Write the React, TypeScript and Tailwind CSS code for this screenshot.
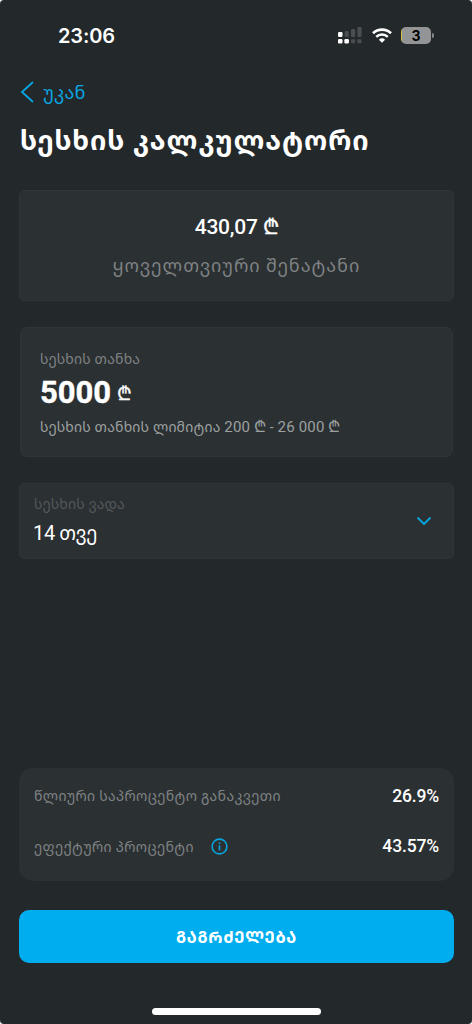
import { ChevronDown } from "lucide-react";
import type { ReactNode } from "react";

const rates = [
  { label: "წლიური საპროცენტო განაკვეთი", value: "26.9%", info: false },
  { label: "ეფექტური პროცენტი", value: "43.57%", info: true },
];

function SignalIcon() {
  return (
    <svg width="25" height="17" viewBox="0 0 25 17" fill="#fff">
      <rect x="0" y="5" width="4.5" height="5" rx="1.2" />
      <rect x="6.6" y="4" width="4.2" height="6" rx="1.2" fill="#4a4e50" />
      <rect x="13" y="2" width="4.2" height="8" rx="1.2" fill="#4a4e50" />
      <rect x="19.4" y="0" width="4.2" height="10" rx="1.2" fill="#4a4e50" />
      <rect x="0" y="12" width="4.5" height="4.5" rx="1.2" />
      <rect x="6.4" y="12" width="4.5" height="4.5" rx="1.2" />
      <rect x="13" y="12.2" width="4.2" height="4" rx="1.2" fill="#4a4e50" />
      <rect x="19.4" y="12.2" width="4.2" height="4" rx="1.2" fill="#4a4e50" />
    </svg>
  );
}

function WifiIcon() {
  return (
    <svg width="20" height="15" viewBox="0 0 20 15" fill="none" stroke="#fff">
      <path d="M1 5.2a13 13 0 0 1 18 0" strokeWidth="2.6" />
      <path d="M4.2 8.8a8.4 8.4 0 0 1 11.6 0" strokeWidth="2.5" />
      <path d="M10 14.8 6.9 11.8a4.5 4.5 0 0 1 6.2 0Z" fill="#fff" stroke="none" />
    </svg>
  );
}

function Battery() {
  return (
    <div className="flex items-center gap-px">
      <div className="flex h-[17px] w-[30px] items-center justify-center overflow-hidden rounded-[5px] bg-[linear-gradient(to_right,#d8c13c_1.5px,#929496_1.5px)] font-['Inter'] text-[14px] leading-none font-bold text-black">
        3
      </div>
      <div className="h-[5px] w-[2px] rounded-r-full bg-[#85888a]" />
    </div>
  );
}

function InfoIcon() {
  return (
    <svg width="17" height="17" viewBox="0 0 17 17" fill="none" stroke="#06a5e0">
      <circle cx="8.5" cy="8.5" r="7.4" strokeWidth="1.6" />
      <path d="M8.5 7.2v5.2" strokeWidth="1.6" />
      <path d="M8.5 4.4v1.6" strokeWidth="1.6" />
    </svg>
  );
}

function Lari({ className }: { className: string }) {
  return <span className={`inline-block font-['DejaVu_Sans'] leading-none font-normal ${className}`}>₾</span>;
}

function Card({ className, children }: { className: string; children: ReactNode }) {
  return <section className={`border border-[#303537] bg-[#2b3032] ${className}`}>{children}</section>;
}

export default function App() {
  return (
    <div className="h-[1024px] w-[472px] bg-white">
      <main className="flex h-full flex-col overflow-hidden rounded-[4px] bg-[#23282a] pr-[18px] pl-[19px] font-['Roboto','Noto_Sans_Georgian','Noto_Sans',sans-serif] whitespace-nowrap text-white">
        <header className="flex h-[71px] shrink-0 items-center justify-between pr-[20px] pl-[39px]">
          <span className="pt-px font-['Inter'] text-[20px] font-semibold tracking-[-0.1px]">23:06</span>
          <div className="flex items-center gap-[9px]">
            <SignalIcon />
            <WifiIcon />
            <Battery />
          </div>
        </header>

        <button className="flex h-[42px] shrink-0 items-center gap-[7px] text-[#0aa6e2]">
          <svg width="17" height="24" viewBox="0 0 17 24" fill="none" stroke="currentColor" strokeWidth="1.8">
            <path d="M14 2 3 12l11 10" />
          </svg>
          <span className="text-[18px] tracking-[0.2px]">უკან</span>
        </button>

        <h1 className="h-[77px] shrink-0 pt-[9px] pl-px text-[27px] leading-[38px] font-bold tracking-[0.93px]">
          სესხის კალკულატორი
        </h1>

        <Card className="flex h-[111px] shrink-0 flex-col items-center rounded-[5px] pt-[22px]">
          <p className="h-[28px] text-[21px] leading-[28px] font-medium tracking-[-0.25px]">
            430,07 <Lari className="text-[21px] [-webkit-text-stroke:0.4px_white]" />
          </p>
          <p className="mt-[10px] text-[18px] leading-[30px] tracking-[0.95px] text-[#7f8284]">ყოველთვიური შენატანი</p>
        </Card>

        <Card className="mx-px mt-[26px] flex h-[130px] shrink-0 flex-col rounded-[7px] px-[19px] pt-[20px]">
          <p className="text-[14px] leading-[22px] tracking-[0.2px] text-[#7f8284]">სესხის თანხა</p>
          <p className="mt-[4px] flex h-[38px] items-center gap-[6px]">
            <span className="text-[31px] font-bold [-webkit-text-stroke:0.4px_white]">5000</span>
            <Lari className="text-[19px] [-webkit-text-stroke:0.3px_white]" />
          </p>
          <p className="mt-[5px] h-[20px] text-[14px] leading-[20px] tracking-[0.2px] text-[#9da0a1]">
            სესხის თანხის ლიმიტია <span className="text-[15px]">200</span> <Lari className="text-[16px]" /> -{" "}
            <span className="text-[15px]">26 000</span> <Lari className="text-[16px]" />
          </p>
        </Card>

        <Card className="mt-[26px] flex h-[76px] shrink-0 items-center justify-between rounded-[5px] pr-[17px] pl-[13px]">
          <div>
            <p className="pl-px text-[14px] leading-[22px] tracking-[0.2px] text-[#53585a]">სესხის ვადა</p>
            <p className="mt-[3px] text-[19px] leading-[30px] tracking-[-0.3px]">
              <span className="text-[20px]">14</span> თვე
            </p>
          </div>
          <ChevronDown size={24} strokeWidth={1.8} color="#06a5e0" />
        </Card>

        <section className="mt-[209px] flex h-[113px] shrink-0 flex-col rounded-[14px] bg-[#2b3032] px-[15px] pt-[12px]">
          {rates.map((rate) => (
            <div key={rate.label} className="mb-[19px] flex h-[32px] items-center">
              <span className="pt-[2px] text-[14px] tracking-[0.35px] text-[#7f8284]">{rate.label}</span>
              {rate.info && (
                <span className="ml-[17px]">
                  <InfoIcon />
                </span>
              )}
              <span className="ml-auto text-[17.5px] font-medium tracking-[-0.15px]">{rate.value}</span>
            </div>
          ))}
        </section>

        <button className="mt-[29px] flex h-[53px] shrink-0 items-center justify-center rounded-[10px] bg-[#00aeef] text-[16px] font-bold tracking-[0.7px]">
          <span className="pt-[2px]">ᲒᲐᲒᲠᲫᲔᲚᲔᲑᲐ</span>
        </button>

        <div className="mx-auto mt-[45px] h-[7px] w-[169px] shrink-0 rounded-full bg-white" />
      </main>
    </div>
  );
}
